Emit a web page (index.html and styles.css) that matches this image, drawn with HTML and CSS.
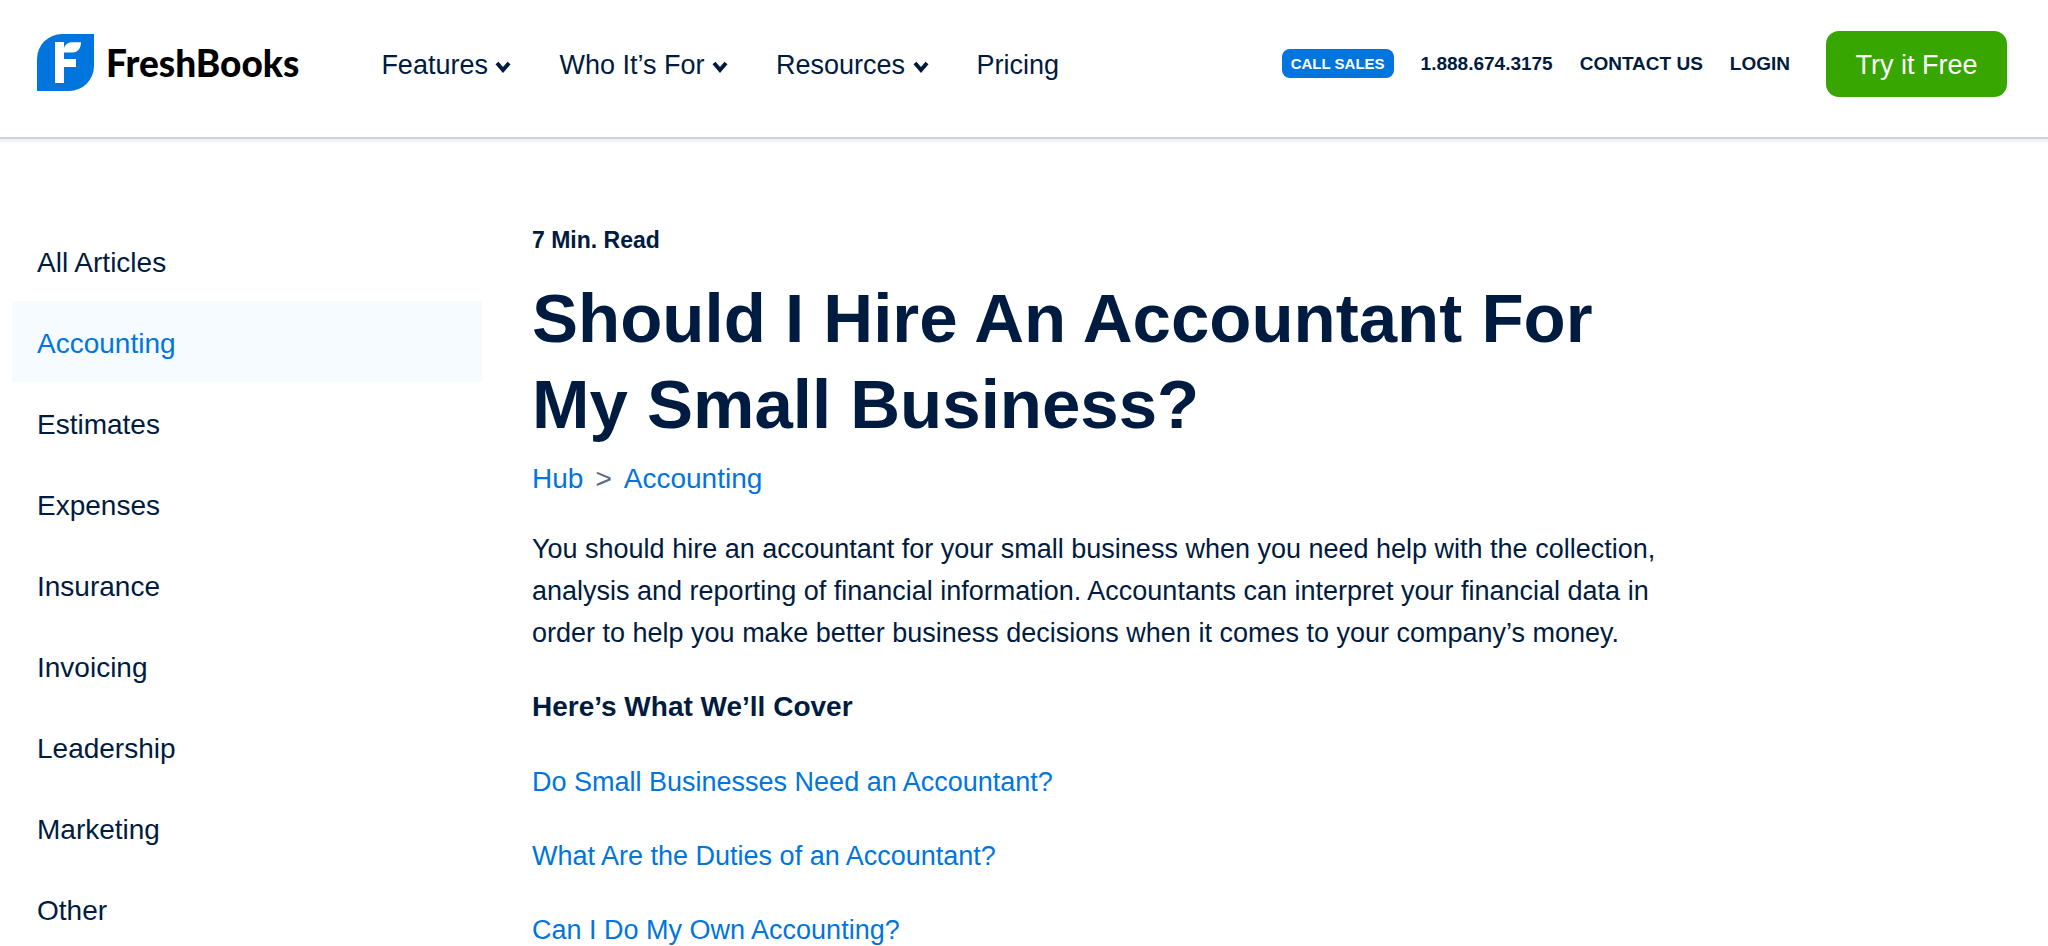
FILE: index.html
```html
<!DOCTYPE html>
<html lang="en">
<head>
  <meta charset="UTF-8">
  <meta name="viewport" content="width=device-width, initial-scale=1">
  <title>Should I Hire An Accountant For My Small Business?</title>
  <link rel="stylesheet" href="styles.css">
</head>
<body>
  <header class="header">
    <a class="logo" href="#">
      <svg class="logo-mark" viewBox="0 0 57 57" aria-hidden="true">
        <path d="M25 0H57V32A25 25 0 0 1 32 57H0V25A25 25 0 0 1 25 0Z" fill="#0075dd"/>
        <path d="M18 8H27V14C28.500 10 31.500 8.300 35.500 8.300H44C44 14 41 18.500 35.500 18.500H27V25H39V33H27V49H18Z" fill="#fff"/>
      </svg>
      <span class="logo-text">FreshBooks</span>
    </a>

    <nav class="main-nav">
      <a href="#">Features <svg class="chevron" viewBox="0 0 16 14"><path d="M2 3L8 10L14 3"/></svg></a>
      <a href="#">Who It’s For <svg class="chevron" viewBox="0 0 16 14"><path d="M2 3L8 10L14 3"/></svg></a>
      <a href="#">Resources <svg class="chevron" viewBox="0 0 16 14"><path d="M2 3L8 10L14 3"/></svg></a>
      <a href="#">Pricing</a>
    </nav>

    <div class="side-nav">
      <a class="badge" href="#">CALL SALES</a>
      <a href="#">1.888.674.3175</a>
      <a href="#">CONTACT US</a>
      <a href="#">LOGIN</a>
      <button class="try-button" type="button">Try it Free</button>
    </div>
  </header>

  <div class="container">
    <aside class="sidebar">
      <ul>
        <li><a href="#">All Articles</a></li>
        <li><a class="active" href="#">Accounting</a></li>
        <li><a href="#">Estimates</a></li>
        <li><a href="#">Expenses</a></li>
        <li><a href="#">Insurance</a></li>
        <li><a href="#">Invoicing</a></li>
        <li><a href="#">Leadership</a></li>
        <li><a href="#">Marketing</a></li>
        <li><a href="#">Other</a></li>
      </ul>
    </aside>

    <main class="article">
      <p class="read-time">7 Min. Read</p>
      <h1>Should I Hire An Accountant For My Small Business?</h1>
      <div class="breadcrumb">
        <a href="#">Hub</a>
        <span>&gt;</span>
        <a href="#">Accounting</a>
      </div>
      <p>You should hire an accountant for your small business when you need help with the collection, analysis and reporting of financial information. Accountants can interpret your financial data in order to help you make better business decisions when it comes to your company’s money.</p>
      <h2>Here’s What We’ll Cover</h2>
      <p><a href="#need">Do Small Businesses Need an Accountant?</a></p>
      <p><a href="#duties">What Are the Duties of an Accountant?</a></p>
      <p><a href="#own">Can I Do My Own Accounting?</a></p>
    </main>
  </div>
</body>
</html>
```
FILE: styles.css
```css
* {
  box-sizing: border-box;
}

html {
  overflow: hidden;
}

body {
  margin: 0;
  font-family: "Liberation Sans", Arial, sans-serif;
  font-size: 27px;
  line-height: 42px;
  color: #001b40;
  background-color: #fff;
}

a {
  color: #0075dd;
  text-decoration: none;
}

/* header */
.header {
  display: flex;
  align-items: center;
  height: 139px;
  padding: 0 41px 12px 37px;
  border-bottom: 2px solid #cdd4d9;
  box-shadow: 0 3px 0 #f0f3f5;
}

.header a {
  color: #001b40;
  white-space: nowrap;
}

.logo {
  display: flex;
  align-items: center;
  gap: 12px;
}

.logo-mark {
  width: 57px;
  height: 57px;
}

.header .logo-text {
  font-family: Lato, sans-serif;
  font-size: 37px;
  font-weight: 900;
  color: #000;
}

.main-nav {
  display: flex;
  gap: 48px;
  margin-top: 4px;
  margin-left: 82px;
}

.chevron {
  width: 16px;
  height: 14px;
  fill: none;
  stroke: #001b40;
  stroke-width: 4px;
}

.side-nav {
  display: flex;
  align-items: center;
  gap: 27px;
  margin-top: 2px;
  margin-left: auto;
  font-size: 19px;
  font-weight: bold;
}

.header .badge {
  padding: 0 9px;
  border-radius: 8px;
  font-size: 15px;
  line-height: 29px;
  color: #fff;
  background-color: #0075dd;
}

.try-button {
  width: 181px;
  height: 66px;
  margin-left: 9px;
  padding: 4px 0 0;
  border: none;
  border-radius: 13px;
  font-family: inherit;
  font-size: 27px;
  color: #fff;
  background-color: #37a600;
  cursor: pointer;
}

/* page body */
.container {
  display: flex;
  gap: 50px;
  padding: 81px 12px 0;
}

.sidebar {
  flex: 0 0 470px;
  font-size: 28px;
}

.sidebar ul {
  margin: 0;
  padding: 0;
  list-style: none;
}

.sidebar a {
  display: block;
  padding: 22px 25px 18px;
  line-height: 41px;
  color: #001b40;
}

.sidebar .active {
  color: #0075dd;
  background-color: #f5fbff;
}

.article {
  flex: 0 1 1136px;
}

.article p {
  margin: 0 0 32px;
}

.article .read-time {
  margin: 0 0 16px;
  font-size: 23px;
  font-weight: bold;
  line-height: 40px;
}

h1 {
  margin: 0 0 10px;
  font-size: 69px;
  line-height: 86px;
}

h2 {
  margin: 0 0 33px;
  font-size: 28px;
  line-height: 42px;
}

.breadcrumb {
  display: flex;
  gap: 12px;
  margin-bottom: 28px;
  font-size: 28px;
}

.breadcrumb span {
  color: #576981;
}
```
